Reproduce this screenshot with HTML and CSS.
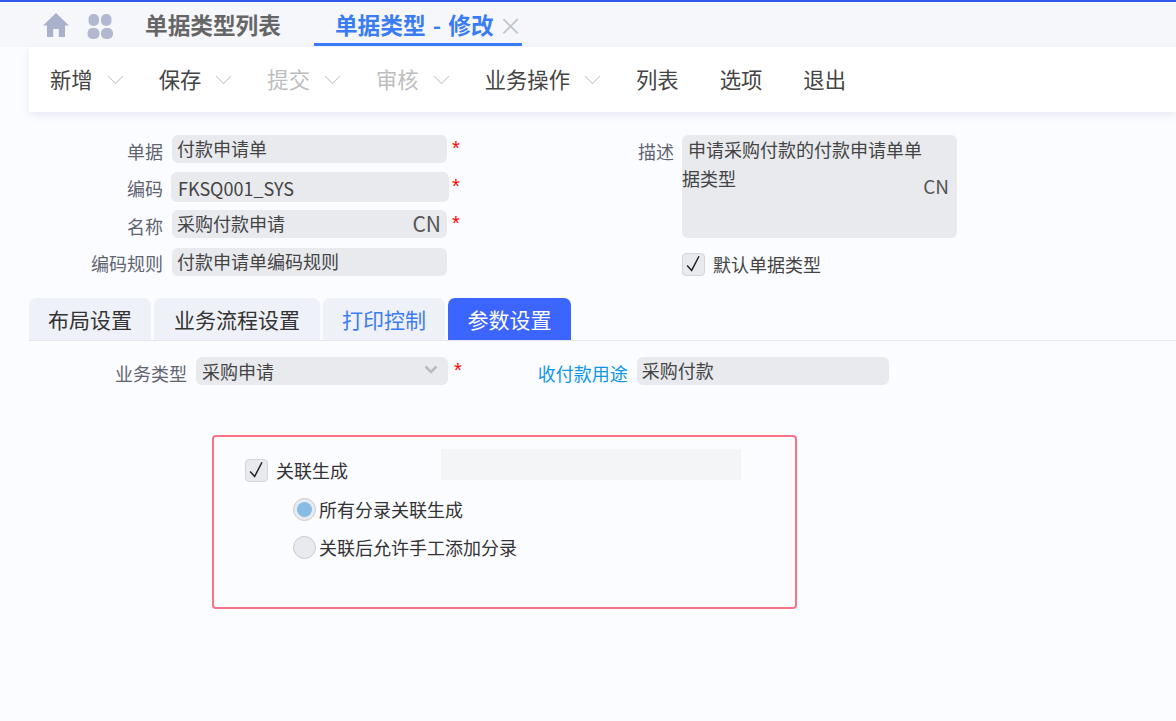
FILE: index.html
```html
<!DOCTYPE html>
<html lang="zh">
<head>
<meta charset="utf-8">
<title>单据类型 - 修改</title>
<link rel="stylesheet" href="styles.css">
</head>
<body>
<header class="topbar">
  <svg class="icon-home" viewBox="0 0 28 26" width="28" height="26"><path d="M14 1 L27 13.500 L23 13.500 L23 25 L16.800 25 L16.800 17 L11.200 17 L11.200 25 L5 25 L5 13.500 L1 13.500 Z" fill="#a9b1cb"/></svg>
  <svg class="icon-apps" viewBox="0 0 26 26" width="26" height="26"><rect x="1.500" y="0" width="10.500" height="12" rx="5" fill="#b1b8cf"/><rect x="14" y="0" width="10.500" height="12" rx="5" fill="#b1b8cf"/><rect x="0.500" y="14" width="12" height="11" rx="5" fill="#b1b8cf"/><rect x="14" y="14" width="12" height="11" rx="5" fill="#b1b8cf"/></svg>
  <span class="crumb">单据类型列表</span>
  <span class="crumb crumb-active">单据类型 - 修改<span class="crumb-close">×</span></span>
</header>

<nav class="toolbar">
  <span class="tool">新增<i class="chev"></i></span>
  <span class="tool">保存<i class="chev"></i></span>
  <span class="tool tool-off">提交<i class="chev"></i></span>
  <span class="tool tool-off">审核<i class="chev"></i></span>
  <span class="tool">业务操作<i class="chev"></i></span>
  <span class="tool">列表</span>
  <span class="tool">选项</span>
  <span class="tool">退出</span>
</nav>

<section class="form">
  <div class="form-left">
    <div class="row">
      <label class="lbl">单据</label><div class="field">付款申请单</div><b class="star">*</b>
    </div>
    <div class="row row-code">
      <label class="lbl">编码</label><div class="field field-code">FKSQ001_SYS</div><b class="star star-code">*</b>
    </div>
    <div class="row row-name">
      <label class="lbl">名称</label><div class="field">采购付款申请<span class="cn">CN</span></div><b class="star">*</b>
    </div>
    <div class="row row-rule">
      <label class="lbl">编码规则</label><div class="field">付款申请单编码规则</div>
    </div>
  </div>
  <div class="form-right">
    <div class="desc-row">
      <label class="lbl-desc">描述</label>
      <div class="desc"><span class="desc-first">申请采购付款的付款申请单单</span><br>据类型<span class="desc-cn">CN</span></div>
    </div>
    <div class="default-row">
      <span class="check"><svg viewBox="0 0 23 23" width="21" height="21"><path d="M4.500 12.500 L9.500 18 L17.500 2.500" fill="none" stroke="#222" stroke-width="1.600"/></svg></span>
      <span class="check-text">默认单据类型</span>
    </div>
  </div>
</section>

<div class="tabs">
  <span class="tab tab-1">布局设置</span>
  <span class="tab tab-2">业务流程设置</span>
  <span class="tab tab-3">打印控制</span>
  <span class="tab tab-4">参数设置</span>
</div>

<section class="biz">
  <label class="biz-lbl">业务类型</label>
  <div class="select">采购申请<svg class="select-chev" viewBox="0 0 14 9" width="14" height="9"><path d="M1.500 1.500 L7 7 L12.500 1.500" fill="none" stroke="#b8bcc3" stroke-width="2.600"/></svg></div>
  <b class="star biz-star">*</b>
  <label class="biz-link">收付款用途</label>
  <div class="purpose">采购付款</div>
</section>

<section class="panel">
  <div class="panel-mask"></div>
  <div class="panel-head">
    <span class="check"><svg viewBox="0 0 23 23" width="21" height="21"><path d="M4.500 12.500 L9.500 18 L17.500 2.500" fill="none" stroke="#222" stroke-width="1.600"/></svg></span>
    <span class="panel-title">关联生成</span>
  </div>
  <div class="radio-row"><span class="radio radio-on"></span><span>所有分录关联生成</span></div>
  <div class="radio-row radio-row-2"><span class="radio"></span><span>关联后允许手工添加分录</span></div>
</section>
</body>
</html>
```
FILE: styles.css
```css
* { box-sizing: border-box; }
html, body { margin: 0; height: 721px; overflow: hidden; }
body {
  background: #fbfcff;
  color: #333;
  font-family: "Noto Sans CJK SC", "Noto Sans", sans-serif;
  border-top: 2px solid #2f5bea;
}
.topbar {
  height: 45px;
  background: #f5f7fb;
  display: flex;
  align-items: flex-start;
  padding-left: 42px;
}
.icon-home { margin-top: 10px; }
.icon-apps { margin: 12px 0 0 17px; }
.crumb {
  font-size: 22.670px;
  font-weight: 700;
  color: #666;
  line-height: 30px;
  margin: 8px 0 0 32px;
}
.crumb-active {
  color: #3a7cf6;
  margin: 0 0 0 33px;
  height: 44px;
  padding: 8px 0 0 21px;
  width: 208px;
  border-bottom: 3px solid #3a7cf6;
  white-space: nowrap;
  display: flex;
  word-spacing: 2px;
}
.crumb-close { font-weight: 400; color: #c2c4cc; font-size: 24px; margin-left: 5px; }

.toolbar {
  margin-left: 29px;
  height: 65px;
  background: #fff;
  box-shadow: 0 3px 8px rgba(160, 170, 200, .22);
  display: flex;
  align-items: flex-start;
  padding: 17px 0 0 21px;
  font-size: 21.330px;
  color: #444;
}
.tool { display: flex; align-items: center; margin-right: 41px; line-height: 30px; white-space: nowrap; }
.tool-off { color: #bdbdbd; }
.chev {
  width: 11px; height: 11px;
  margin: -6px -3px 0 17px;
  border-right: 1.500px solid #c8cad0;
  border-bottom: 1.500px solid #c8cad0;
  transform: rotate(45deg);
}

.form {
  display: flex;
  height: 186px;
  padding-top: 23px;
  font-size: 18px;
}
.form-left { width: 638px; }
.row { display: flex; height: 28px; align-items: flex-start; margin-bottom: 9px; }
.row-code { height: 30px; margin-bottom: 8px; }
.row-name { margin-bottom: 10px; }
.lbl {
  width: 163px;
  text-align: right;
  line-height: 28px;
  margin-top: 2px;
  color: #5e6470;
}
.row-rule .lbl { margin-top: 1px; }
.field {
  width: 275px;
  height: 28px;
  margin-left: 9px;
  padding: 0 6px 0 5px;
  background: #e8eaee;
  border-radius: 6px;
  line-height: 26px;
  display: flex;
  justify-content: space-between;
  color: #444;
}
.field-code { width: 278px; height: 30px; margin-left: 8px; padding-left: 7px; line-height: 33px; }
.cn { color: #555; font-size: 21px; line-height: 27px; }
.star {
  color: #f00;
  font-family: "Liberation Sans", sans-serif;
  font-weight: 400;
  font-size: 20px;
  line-height: 26px;
  margin-left: 5px;
}
.star-code { margin-left: 3px; line-height: 28px; }

.desc-row { display: flex; }
.lbl-desc { width: 36px; line-height: 32px; color: #5e6470; }
.desc {
  position: relative;
  width: 275px;
  height: 103px;
  margin-left: 8px;
  background: #e8eaee;
  border-radius: 6px;
  font-size: 18px;
  line-height: 28.500px;
  color: #444;
}
.desc-first { padding-left: 6px; }
.desc-cn { position: absolute; right: 8px; top: 37px; color: #555; font-size: 19px; }
.default-row { display: flex; align-items: center; height: 23px; margin: 15px 0 0 44px; }
.check {
  width: 23px; height: 23px;
  background: #e8eaee;
  border: 1px solid #d4d6dc;
  border-radius: 4px;
  display: flex;
  flex: none;
}
.check-text { margin-left: 8px; color: #444; line-height: 23px; }

.tabs {
  margin-left: 29px;
  height: 43px;
  display: flex;
  gap: 3px;
  border-bottom: 1px solid #e3e6ec;
  font-size: 21px;
  color: #333;
}
.tab {
  height: 42px;
  background: #eff1f8;
  border-radius: 7px 7px 0 0;
  line-height: 42px;
  text-align: center;
}
.tab-1 { width: 122px; }
.tab-2 { width: 166px; }
.tab-3 { width: 122px; color: #3a7cf6; }
.tab-4 { width: 123px; background: #3c64ff; color: #fff; }

.biz { display: flex; align-items: flex-start; height: 94px; padding-top: 16px; font-size: 18px; }
.biz-lbl { width: 187px; text-align: right; line-height: 32px; color: #5e6470; }
.select {
  width: 252px; height: 28px;
  margin-left: 9px;
  padding: 0 6px;
  background: #e8eaee;
  border-radius: 6px;
  line-height: 26px;
  color: #444;
  display: flex;
  justify-content: space-between;
  align-items: center;
}
.select-chev { margin-right: 4px; margin-top: -3px; }
.biz-star { margin-left: 6px; }
.biz-link { margin-left: 76px; color: #0e96e8; line-height: 32px; }
.purpose {
  width: 252px; height: 28px;
  margin-left: 9px;
  padding: 0 5px;
  background: #e8eaee;
  border-radius: 6px;
  line-height: 26px;
  color: #444;
}

.panel {
  position: relative;
  margin-left: 212px;
  width: 585px;
  height: 174px;
  border: 2px solid #fb7185;
  border-radius: 4px;
  padding: 22px 0 0 31px;
  font-size: 18px;
  color: #333;
}
.panel-mask {
  position: absolute;
  left: 227px; top: 12px;
  width: 300px; height: 31px;
  background: #f4f5f7;
}
.panel-head { display: flex; align-items: center; height: 23px; }
.panel-title { margin-left: 8px; line-height: 23px; }
.radio-row { display: flex; align-items: center; height: 23px; line-height: 23px; margin: 16px 0 0 48px; }
.radio-row-2 { margin-top: 15px; }
.radio {
  width: 23px; height: 23px;
  margin-right: 3px;
  border-radius: 50%;
  background: #e8eaee;
  border: 1px solid #c9cbd1;
  flex: none;
  position: relative;
}
.radio-on::after {
  content: "";
  position: absolute;
  left: 3px; top: 3px;
  width: 15px; height: 15px;
  border-radius: 50%;
  background: #86bce6;
}
```
